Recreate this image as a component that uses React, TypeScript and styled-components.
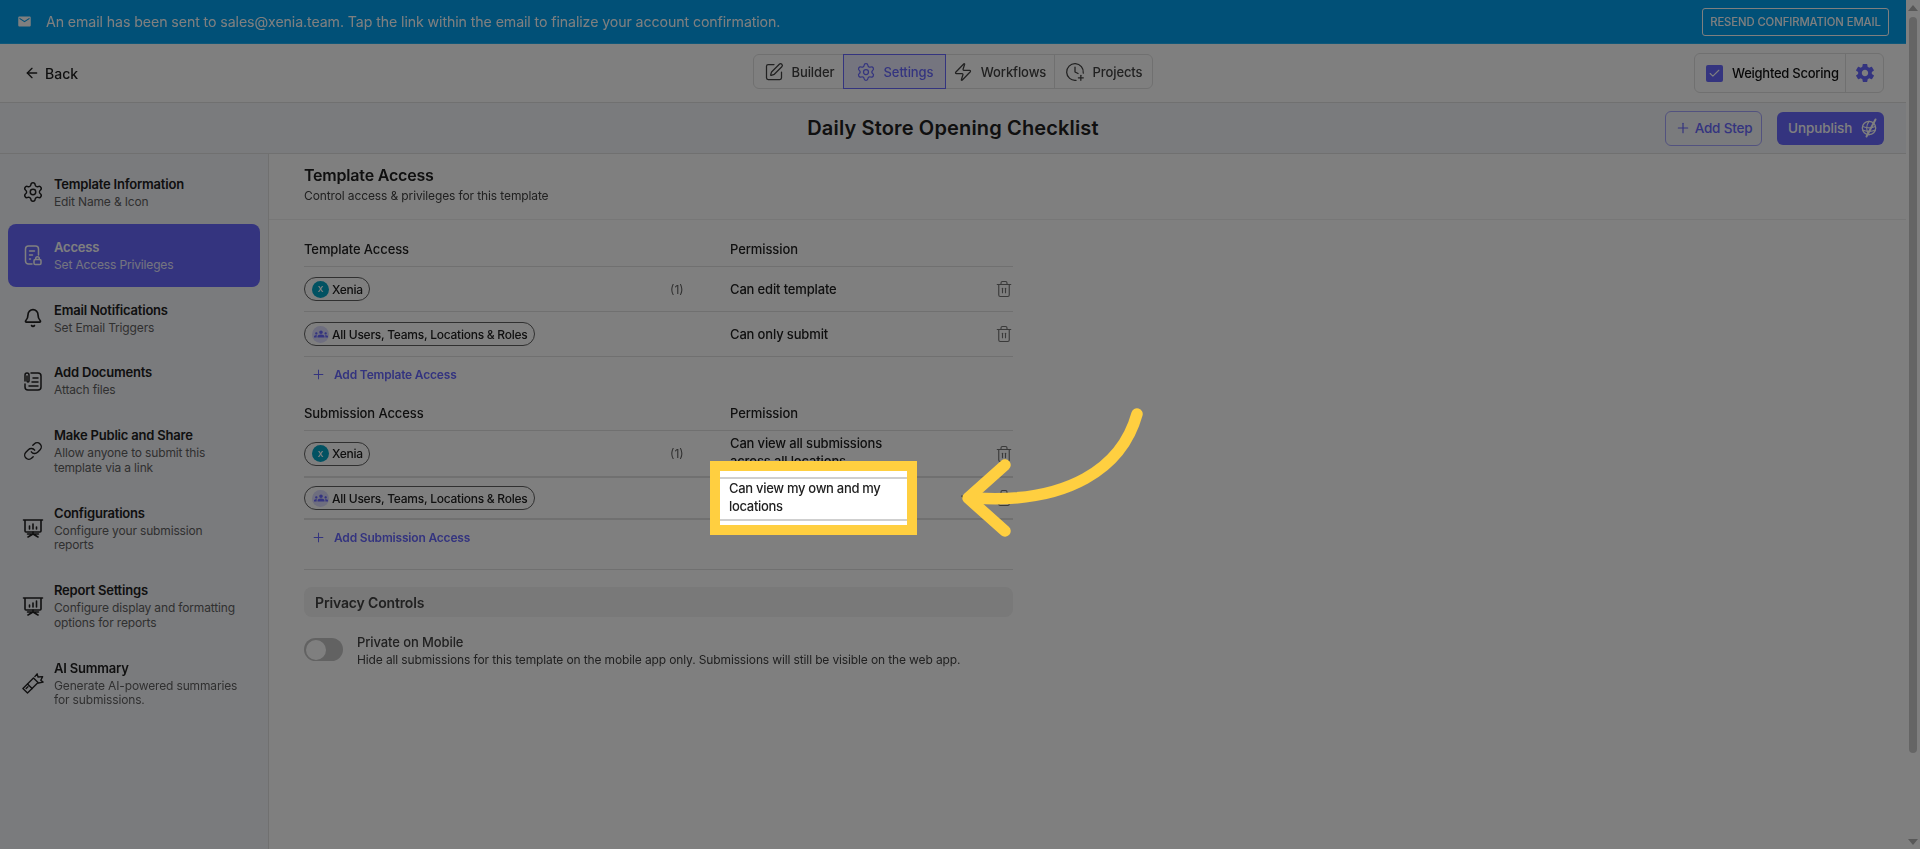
import React from 'react';
import styled, { createGlobalStyle } from 'styled-components';
import { ArrowLeft, SquarePen, Settings, Zap, ClockPlus, Plus, Bell, Link, Trash2, Check } from 'lucide-react';
import { IoMdSettings } from 'react-icons/io';
import { MdEmail, MdGroups } from 'react-icons/md';

const GlobalStyle = createGlobalStyle`
  html, body { margin: 0; height: 100%; overflow: hidden; background: #fff; }
  body { font-family: Inter, "Noto Sans", sans-serif; color: #212121; }
  * { box-sizing: border-box; }
`;

const Shell = styled.div`
  position: relative;
  display: flex;
  width: 1920px;
  height: 849px;
  overflow: hidden;
  filter: blur(0.4px);
`;

const Column = styled.div`
  flex: 1;
  min-width: 0;
  display: flex;
  flex-direction: column;
`;

const Scrollbar = styled.div`
  width: 14px;
  background: #fff;
  display: flex;
  flex-direction: column;
  align-items: center;
  padding: 5px 0 4px;
`;

const ScrollArrow = styled.div<{ $down?: boolean }>`
  width: 0;
  height: 0;
  border-left: 5px solid transparent;
  border-right: 5px solid transparent;
  border-bottom: ${(p) => (p.$down ? 'none' : '6px solid #b0b0b0')};
  border-top: ${(p) => (p.$down ? '6px solid #b0b0b0' : 'none')};
  margin-top: ${(p) => (p.$down ? 'auto' : '0')};
`;

const ScrollThumb = styled.div`
  width: 8px;
  height: 736px;
  margin: 6px 0 0;
  border-radius: 4px;
  background: #cbcbcb;
`;

const Overlay = styled.div`
  position: absolute;
  inset: 0;
  background: rgba(0, 0, 0, 0.5);
  z-index: 2;
`;

const Banner = styled.div`
  height: 44px;
  flex: none;
  display: flex;
  align-items: center;
  padding: 0 17px;
  background: #02a0ef;
  border-bottom: 1px solid #1eb0f5;
  color: #fff;
  font-size: 14.2px;
  letter-spacing: -0.1px;
  gap: 14px;
`;

const BannerText = styled.span`
  flex: 1;
`;

const ResendButton = styled.button`
  height: 28px;
  width: 187px;
  border: 1px solid #fff;
  border-radius: 3px;
  background: transparent;
  color: #fff;
  font: 500 11.3px Inter, sans-serif;
  letter-spacing: -0.1px;
  text-transform: uppercase;
  padding: 0;
`;

const TopBar = styled.div`
  height: 59px;
  flex: none;
  display: grid;
  grid-template-columns: 1fr auto 1fr;
  align-items: center;
  padding: 0 22px;
  border-bottom: 1px solid #e0e0e0;
`;

const BackLink = styled.div`
  display: flex;
  align-items: center;
  gap: 5px;
  margin-left: 2px;
  font-size: 14px;
  font-weight: 500;
  color: #212121;
`;

const Tabs = styled.div`
  display: flex;
  height: 35px;
  margin-bottom: 3px;
  border: 1px solid #e0e0e0;
  border-radius: 6px;
`;

const Tab = styled.div<{ $active?: boolean; $w: number; $divider?: boolean }>`
  width: ${(p) => p.$w}px;
  display: flex;
  align-items: center;
  justify-content: center;
  gap: 8px;
  font-size: 13px;
  font-weight: 500;
  letter-spacing: -0.1px;
  color: ${(p) => (p.$active ? '#6868fe' : '#424242')};
  background: ${(p) => (p.$active ? '#ebebff' : 'transparent')};
  outline: ${(p) => (p.$active ? '1px solid #6868fe' : 'none')};
  border-left: ${(p) => (p.$divider ? '1px solid #e0e0e0' : 'none')};
`;

const RightGroup = styled.div`
  justify-self: end;
  display: flex;
  height: 40px;
  width: 190px;
  border: 1px solid #e0e0e0;
  border-radius: 6px;
`;

const ScoreCell = styled.div`
  flex: 1;
  display: flex;
  align-items: center;
  gap: 9px;
  padding-left: 11px;
  font-size: 13px;
  font-weight: 500;
  letter-spacing: -0.25px;
  color: #111;
  border-right: 1px solid #e0e0e0;
`;

const CheckBox = styled.span`
  width: 17px;
  height: 17px;
  border-radius: 2px;
  background: #6868fe;
  color: #fff;
  display: flex;
  align-items: center;
  justify-content: center;
`;

const GearCell = styled.div`
  width: 37px;
  display: flex;
  align-items: center;
  justify-content: center;
  color: #6868fe;
`;

const TitleBar = styled.div`
  height: 51px;
  flex: none;
  display: grid;
  grid-template-columns: 1fr auto 1fr;
  align-items: center;
  padding: 0 22px;
  background: #f5f6fb;
  border-bottom: 1px solid #e0e0e0;
`;

const PageTitle = styled.h1`
  grid-column: 2;
  margin: 0;
  font-size: 20px;
  font-weight: 600;
  letter-spacing: 0.15px;
  color: #212121;
`;

const TitleActions = styled.div`
  justify-self: end;
  display: flex;
  align-items: center;
  gap: 15px;
`;

const AddStep = styled.button`
  width: 97px;
  height: 35px;
  display: flex;
  align-items: center;
  justify-content: center;
  gap: 4px;
  border: 1px solid #a5a5fe;
  border-radius: 6px;
  background: transparent;
  color: #6868fe;
  font: 500 13.5px Inter, sans-serif;
  letter-spacing: -0.2px;
  padding: 0;
`;

const Unpublish = styled.button`
  width: 107px;
  height: 33px;
  display: flex;
  align-items: center;
  justify-content: flex-start;
  gap: 9px;
  border: none;
  border-radius: 6px;
  background: #6868fe;
  color: #fff;
  font: 500 13.5px Inter, sans-serif;
  letter-spacing: -0.1px;
  padding: 0 0 0 11px;
`;

const Body = styled.div`
  flex: 1;
  display: flex;
  min-height: 0;
`;

const Sidebar = styled.aside`
  width: 269px;
  flex: none;
  padding: 7px 8px 0;
  background: #f5f6fb;
  border-right: 1px solid #e0e0e0;
  display: flex;
  flex-direction: column;
`;

const NavItem = styled.div<{ $active?: boolean }>`
  display: flex;
  align-items: center;
  gap: 10px;
  padding: 14px 8px 14px 14px;
  border-radius: 8px;
  background: ${(p) => (p.$active ? '#6868fe' : 'transparent')};
  color: ${(p) => (p.$active ? '#fff' : '#212121')};
`;

const NavIcon = styled.span`
  width: 22px;
  height: 24px;
  flex: none;
  display: flex;
  align-items: center;
  justify-content: center;
`;

const NavTitle = styled.div`
  font-size: 13px;
  font-weight: 600;
  line-height: 18px;
  letter-spacing: -0.2px;
`;

const NavSub = styled.div<{ $active?: boolean }>`
  font-size: 12px;
  line-height: 14.75px;
  letter-spacing: -0.15px;
  margin-top: 2px;
  color: ${(p) => (p.$active ? '#e8e8ff' : '#616161')};
`;

const Main = styled.main`
  flex: 1;
  min-width: 0;
`;

const MainHeader = styled.header`
  height: 66px;
  padding: 10px 0 0 35px;
  border-bottom: 1px solid #eeeeee;
`;

const MainTitle = styled.h2`
  margin: 0;
  font-size: 16px;
  font-weight: 600;
  line-height: 22px;
  letter-spacing: -0.2px;
`;

const MainSub = styled.p`
  margin: 0;
  padding-top: 1px;
  font-size: 12px;
  line-height: 18px;
  letter-spacing: -0.12px;
  color: #424242;
`;

const Content = styled.div`
  width: 709px;
  margin-left: 35px;
  padding-top: 12px;
`;

const AccessGrid = styled.div`
  display: grid;
  grid-template-columns: 366px 60px 1fr 24px;
  align-items: center;
`;

const HeadRow = styled(AccessGrid)`
  height: 35px;
  font-size: 13px;
  font-weight: 500;
  letter-spacing: -0.1px;
  color: #212121;
  border-bottom: 1px solid #e0e0e0;
`;

const AccessRow = styled(AccessGrid)<{ $h: number; $strong?: boolean }>`
  height: ${(p) => p.$h}px;
  border-bottom: ${(p) => (p.$strong ? '2px' : '1px')} solid #e0e0e0;
`;

const Chip = styled.span`
  justify-self: start;
  display: inline-flex;
  align-items: center;
  gap: 3px;
  height: 24px;
  padding: 0 6px 0 7px;
  border: 1px solid #616161;
  border-radius: 12px;
  font-size: 12px;
  font-weight: 500;
  letter-spacing: -0.25px;
`;

const Avatar = styled.span<{ $team?: boolean }>`
  width: 17px;
  height: 17px;
  border-radius: 50%;
  display: flex;
  align-items: center;
  justify-content: center;
  font-size: 8px;
  font-weight: 600;
  color: ${(p) => (p.$team ? '#6868fe' : '#fff')};
  background: ${(p) => (p.$team ? '#dcdcff' : '#05a5c5')};
`;

const Count = styled.span`
  font-size: 12px;
  color: #616161;
`;

const Permission = styled.div<{ $raised?: boolean }>`
  position: relative;
  font-size: 13px;
  font-weight: 500;
  line-height: 18px;
  letter-spacing: -0.15px;
  margin-bottom: ${(p) => (p.$raised ? '4px' : '0')};
`;

const TrashButton = styled.span`
  justify-self: end;
  display: flex;
  color: #757575;
`;

const AddRow = styled.div`
  height: 35px;
  display: flex;
  align-items: center;
  gap: 8px;
  padding-left: 7px;
  color: #6868fe;
  font-size: 12px;
  font-weight: 600;
  letter-spacing: -0.18px;
`;

const Gap = styled.div`
  height: 4px;
`;

const Divider = styled.div`
  height: 1px;
  margin-top: 14px;
  background: #e0e0e0;
`;

const PrivacyBar = styled.div`
  height: 30px;
  margin-top: 17px;
  display: flex;
  align-items: center;
  padding-left: 11px;
  border-radius: 8px;
  background: #f2f2f2;
  font-size: 14px;
  font-weight: 600;
  letter-spacing: -0.15px;
  color: #424242;
`;

const ToggleRow = styled.div`
  display: flex;
  gap: 14px;
  padding-top: 16px;
`;

const Track = styled.span`
  width: 39px;
  height: 23px;
  flex: none;
  margin-top: 5px;
  border-radius: 12px;
  background: #c4c4c4;
  padding: 1.5px;
  display: flex;
`;

const Knob = styled.span`
  width: 20px;
  height: 20px;
  border-radius: 50%;
  background: #fff;
`;

const ToggleTitle = styled.div`
  font-size: 13px;
  font-weight: 500;
  line-height: 18px;
  letter-spacing: -0.1px;
  color: #424242;
`;

const ToggleSub = styled.div`
  font-size: 12px;
  line-height: 18px;
  letter-spacing: -0.13px;
  color: #424242;
`;

const Highlight = styled.div`
  position: absolute;
  left: -20px;
  top: -37px;
  width: 207px;
  height: 74px;
  z-index: 3;
  border: 10px solid #ffcf40;
  background: #fff;
  padding-top: 6px;
`;

const HighlightRow = styled.div`
  height: 44px;
  padding: 0 0 0 9px;
  border-top: 2px solid #cfcfcf;
  border-bottom: 2px solid #cfcfcf;
  letter-spacing: -0.3px;
  color: #212121;
`;

const Arrow = styled.svg`
  position: absolute;
  left: 950px;
  top: 400px;
  z-index: 4;
`;

function FileLockIcon() {
  return (
    <svg width="22" height="24" viewBox="0 0 22 24" fill="none" stroke="currentColor" strokeWidth="1.5" strokeLinecap="round" strokeLinejoin="round">
      <path d="M10 21H6.5a3 3 0 0 1-3-3V6a3 3 0 0 1 3-3h7a3 3 0 0 1 3 3v6" />
      <path d="M7.5 8h5M7.5 12h3M7.5 16h1" />
      <rect x="12" y="16.5" width="7" height="5" rx="1.2" />
      <path d="M13.7 16.5v-1a1.8 1.8 0 0 1 3.6 0v1" />
    </svg>
  );
}

function DocClipIcon() {
  return (
    <svg width="22" height="24" viewBox="0 0 22 24" fill="none" stroke="currentColor" strokeWidth="1.5" strokeLinecap="round" strokeLinejoin="round">
      <path d="M9 4h7a3 3 0 0 1 3 3v11a3 3 0 0 1-3 3H6a3 3 0 0 1-3-3v-3" />
      <path d="M3 12V6a2 2 0 0 1 4 0v6a1 1 0 0 1-2 0V7" />
      <path d="M11 9h5M10 13h6M7 17h9" />
    </svg>
  );
}

function BoardIcon({ bars }: { bars: number[] }) {
  return (
    <svg width="22" height="24" viewBox="0 0 22 24" fill="none" stroke="currentColor" strokeWidth="1.6" strokeLinecap="round" strokeLinejoin="round">
      <path d="M1.5 4h19M3 4v11a1 1 0 0 0 1 1h14a1 1 0 0 0 1-1V4" />
      <path d="M11 16v2M11 18l-5 3M11 18l5 3M5.5 18h11" />
      {bars.map((b, i) => (
        <path key={i} d={`M${7.5 + i * 3.5} 13v-${b}`} />
      ))}
    </svg>
  );
}

function RibbonIcon() {
  return (
    <svg width="24" height="24" viewBox="0 0 24 24" fill="none" stroke="currentColor" strokeWidth="1.5" strokeLinecap="round" strokeLinejoin="round">
      <path d="M1 18l5-5 5 5-5 5z" />
      <path d="M6 13l6.5-6.5 5 5L11 18" />
      <path d="M14 5l2.5-3 1 3.5 5-.5-2 4 2.5 2-5 1" />
      <path d="M4.5 18l2-2" />
    </svg>
  );
}

function GlobeOffIcon() {
  return (
    <svg width="17" height="20" viewBox="0 0 17 20" fill="none" stroke="currentColor" strokeWidth="1.3" strokeLinecap="round" strokeLinejoin="round">
      <circle cx="8" cy="10" r="6.7" />
      <path d="M1.6 8.5c4 1.6 9 1.6 12.8 0M1.6 12c4 1.6 9 1.6 12.8 0" />
      <path d="M8 3.3c-3 4-3 9.4 0 13.4" />
      <path d="M14.5 1.5 5.5 18.5" strokeWidth="2" />
    </svg>
  );
}

const navItems = [
  { title: 'Template Information', sub: ['Edit Name & Icon'], icon: <Settings size={22} strokeWidth={1.6} /> },
  { title: 'Access', sub: ['Set Access Privileges'], active: true, icon: <FileLockIcon /> },
  { title: 'Email Notifications', sub: ['Set Email Triggers'], icon: <Bell size={20} strokeWidth={2} /> },
  { title: 'Add Documents', sub: ['Attach files'], icon: <DocClipIcon /> },
  { title: 'Make Public and Share', sub: ['Allow anyone to submit this', 'template via a link'], icon: <Link size={20} strokeWidth={1.7} /> },
  { title: 'Configurations', sub: ['Configure your submission', 'reports'], icon: <BoardIcon bars={[3, 5, 2]} /> },
  { title: 'Report Settings', sub: ['Configure display and formatting', 'options for reports'], icon: <BoardIcon bars={[2, 4, 6]} /> },
  { title: 'AI Summary', sub: ['Generate AI-powered summaries', 'for submissions.'], icon: <RibbonIcon /> },
];

const Nav = () => (
  <Sidebar>
    {navItems.map((item) => (
      <NavItem key={item.title} $active={item.active}>
        <NavIcon>{item.icon}</NavIcon>
        <div>
          <NavTitle>{item.title}</NavTitle>
          <NavSub $active={item.active}>
            {item.sub.map((line) => (
              <div key={line}>{line}</div>
            ))}
          </NavSub>
        </div>
      </NavItem>
    ))}
  </Sidebar>
);

const XeniaChip = () => (
  <Chip>
    <Avatar>X</Avatar>
    Xenia
  </Chip>
);

const EveryoneChip = () => (
  <Chip>
    <Avatar $team>
      <MdGroups size={14} />
    </Avatar>
    All Users, Teams, Locations &amp; Roles
  </Chip>
);

const Trash = () => (
  <TrashButton>
    <Trash2 size={18} strokeWidth={1.5} />
  </TrashButton>
);

export default function App() {
  return (
    <Shell>
      <GlobalStyle />
      <Column>
        <Banner>
          <MdEmail size={15} />
          <BannerText>
            An email has been sent to sales@xenia.team. Tap the link within the email to finalize your account confirmation.
          </BannerText>
          <ResendButton>Resend confirmation email</ResendButton>
        </Banner>

        <TopBar>
          <BackLink>
            <ArrowLeft size={16} />
            Back
          </BackLink>
          <Tabs>
            <Tab $w={90}>
              <SquarePen size={20} strokeWidth={1.5} />
              Builder
            </Tab>
            <Tab $w={101} $active>
              <Settings size={20} strokeWidth={1.5} />
              Settings
            </Tab>
            <Tab $w={109}>
              <Zap size={20} strokeWidth={1.5} />
              Workflows
            </Tab>
            <Tab $w={98} $divider>
              <ClockPlus size={20} strokeWidth={1.5} />
              Projects
            </Tab>
          </Tabs>
          <RightGroup>
            <ScoreCell>
              <CheckBox>
                <Check size={13} strokeWidth={2} />
              </CheckBox>
              Weighted Scoring
            </ScoreCell>
            <GearCell>
              <IoMdSettings size={22} />
            </GearCell>
          </RightGroup>
        </TopBar>

        <TitleBar>
          <PageTitle>Daily Store Opening Checklist</PageTitle>
          <TitleActions>
            <AddStep>
              <Plus size={16} strokeWidth={1.8} />
              Add Step
            </AddStep>
            <Unpublish>
              Unpublish
              <GlobeOffIcon />
            </Unpublish>
          </TitleActions>
        </TitleBar>

        <Body>
          <Nav />
          <Main>
            <MainHeader>
              <MainTitle>Template Access</MainTitle>
              <MainSub>Control access &amp; privileges for this template</MainSub>
            </MainHeader>
            <Content>
              <HeadRow>
                <span>Template Access</span>
                <span />
                <span>Permission</span>
              </HeadRow>
              <AccessRow $h={45}>
                <XeniaChip />
                <Count>(1)</Count>
                <Permission>Can edit template</Permission>
                <Trash />
              </AccessRow>
              <AccessRow $h={45}>
                <EveryoneChip />
                <span />
                <Permission>Can only submit</Permission>
                <Trash />
              </AccessRow>
              <AddRow>
                <Plus size={15} strokeWidth={1.6} />
                Add Template Access
              </AddRow>
              <Gap />
              <HeadRow>
                <span>Submission Access</span>
                <span />
                <span>Permission</span>
              </HeadRow>
              <AccessRow $h={47} $strong>
                <XeniaChip />
                <Count>(1)</Count>
                <Permission $raised>
                  Can view all submissions
                  <br />
                  across all locations
                </Permission>
                <Trash />
              </AccessRow>
              <AccessRow $h={42} $strong>
                <EveryoneChip />
                <span />
                <Permission>
                  <Highlight>
                    <HighlightRow>
                      Can view my own and my
                      <br />
                      locations
                    </HighlightRow>
                  </Highlight>
                </Permission>
                <Trash />
              </AccessRow>
              <AddRow>
                <Plus size={15} strokeWidth={1.6} />
                Add Submission Access
              </AddRow>
              <Divider />
              <PrivacyBar>Privacy Controls</PrivacyBar>
              <ToggleRow>
                <Track>
                  <Knob />
                </Track>
                <div>
                  <ToggleTitle>Private on Mobile</ToggleTitle>
                  <ToggleSub>
                    Hide all submissions for this template on the mobile app only. Submissions will still be visible on the web app.
                  </ToggleSub>
                </div>
              </ToggleRow>
            </Content>
          </Main>
        </Body>
      </Column>
      <Scrollbar>
        <ScrollArrow />
        <ScrollThumb />
        <ScrollArrow $down />
      </Scrollbar>
      <Overlay />
      <Arrow width="200" height="150" viewBox="950 400 200 150" fill="none" stroke="#ffcf40" strokeWidth="11.5" strokeLinecap="round" strokeLinejoin="round">
        <path d="M962 496l6 7" stroke="#3a3a3a" strokeWidth="1.6" />
        <path d="M1137 414C1122 468 1068 504 975 498" />
        <path d="M1005 465L968 498L1005 531" />
      </Arrow>
    </Shell>
  );
}
